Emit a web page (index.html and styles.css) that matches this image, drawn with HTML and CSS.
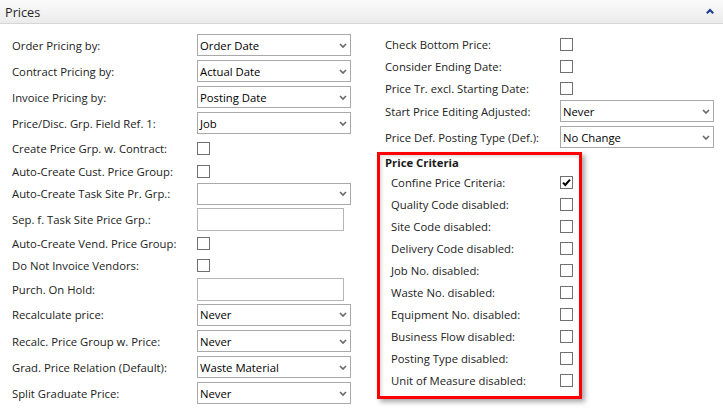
FILE: index.html
```html
<!DOCTYPE html>
<html>
<head>
<meta charset="utf-8">
<link rel="stylesheet" href="styles.css">
</head>
<body>
<div class="panel">
  <div class="header">
    <span class="title">Prices</span>
    <svg class="collapse" width="8" height="6" viewBox="0 0 8 6"><polyline points="0.8,5.2 4,2 7.2,5.2" fill="none" stroke="#1f3e8f" stroke-width="2.2"/></svg>
  </div>
  <div class="content">
    <div class="col-left">
      <div class="grid-left">
        <div class="lbl">Order Pricing by:</div>
        <div class="select"><span>Order Date</span><svg class="arrow" width="8" height="5" viewBox="0 0 8 5"><polyline points="1,1 4,4 7,1" fill="none" stroke="#6b6b6b" stroke-width="1.7"/></svg></div>
        <div class="lbl">Contract Pricing by:</div>
        <div class="select"><span>Actual Date</span><svg class="arrow" width="8" height="5" viewBox="0 0 8 5"><polyline points="1,1 4,4 7,1" fill="none" stroke="#6b6b6b" stroke-width="1.7"/></svg></div>
        <div class="lbl">Invoice Pricing by:</div>
        <div class="select"><span>Posting Date</span><svg class="arrow" width="8" height="5" viewBox="0 0 8 5"><polyline points="1,1 4,4 7,1" fill="none" stroke="#6b6b6b" stroke-width="1.7"/></svg></div>
        <div class="lbl">Price/Disc. Grp. Field Ref. 1:</div>
        <div class="select"><span>Job</span><svg class="arrow" width="8" height="5" viewBox="0 0 8 5"><polyline points="1,1 4,4 7,1" fill="none" stroke="#6b6b6b" stroke-width="1.7"/></svg></div>
        <div class="lbl">Create Price Grp. w. Contract:</div>
        <div class="cb"></div>
        <div class="lbl">Auto-Create Cust. Price Group:</div>
        <div class="cb"></div>
        <div class="lbl">Auto-Create Task Site Pr. Grp.:</div>
        <div class="select"><span></span><svg class="arrow" width="8" height="5" viewBox="0 0 8 5"><polyline points="1,1 4,4 7,1" fill="none" stroke="#6b6b6b" stroke-width="1.7"/></svg></div>
        <div class="lbl">Sep. f. Task Site Price Grp.:</div>
        <div class="textbox"></div>
        <div class="lbl">Auto-Create Vend. Price Group:</div>
        <div class="cb"></div>
        <div class="lbl">Do Not Invoice Vendors:</div>
        <div class="cb"></div>
        <div class="lbl">Purch. On Hold:</div>
        <div class="textbox"></div>
        <div class="lbl">Recalculate price:</div>
        <div class="select"><span>Never</span><svg class="arrow" width="8" height="5" viewBox="0 0 8 5"><polyline points="1,1 4,4 7,1" fill="none" stroke="#6b6b6b" stroke-width="1.7"/></svg></div>
        <div class="lbl">Recalc. Price Group w. Price:</div>
        <div class="select"><span>Never</span><svg class="arrow" width="8" height="5" viewBox="0 0 8 5"><polyline points="1,1 4,4 7,1" fill="none" stroke="#6b6b6b" stroke-width="1.7"/></svg></div>
        <div class="lbl">Grad. Price Relation (Default):</div>
        <div class="select"><span>Waste Material</span><svg class="arrow" width="8" height="5" viewBox="0 0 8 5"><polyline points="1,1 4,4 7,1" fill="none" stroke="#6b6b6b" stroke-width="1.7"/></svg></div>
        <div class="lbl">Split Graduate Price:</div>
        <div class="select"><span>Never</span><svg class="arrow" width="8" height="5" viewBox="0 0 8 5"><polyline points="1,1 4,4 7,1" fill="none" stroke="#6b6b6b" stroke-width="1.7"/></svg></div>
      </div>
    </div>
    <div class="col-right">
      <div class="grid-right">
        <div class="lbl">Check Bottom Price:</div>
        <div class="cb"></div>
        <div class="lbl">Consider Ending Date:</div>
        <div class="cb"></div>
        <div class="lbl">Price Tr. excl. Starting Date:</div>
        <div class="cb"></div>
        <div class="lbl">Start Price Editing Adjusted:</div>
        <div class="select"><span>Never</span><svg class="arrow" width="8" height="5" viewBox="0 0 8 5"><polyline points="1,1 4,4 7,1" fill="none" stroke="#6b6b6b" stroke-width="1.7"/></svg></div>
        <div class="lbl">Price Def. Posting Type (Def.):</div>
        <div class="select"><span>No Change</span><svg class="arrow" width="8" height="5" viewBox="0 0 8 5"><polyline points="1,1 4,4 7,1" fill="none" stroke="#6b6b6b" stroke-width="1.7"/></svg></div>
      </div>
      <div class="group">
        <div class="group-title">Price Criteria</div>
        <div class="grid-group">
          <div class="lbl">Confine Price Criteria:</div>
          <div class="cb checked"><svg width="11" height="11" viewBox="0 0 11 11"><polyline points="2,5.6 4.3,8 9,2.6" fill="none" stroke="#000" stroke-width="2"/></svg></div>
          <div class="lbl">Quality Code disabled:</div>
          <div class="cb"></div>
          <div class="lbl">Site Code disabled:</div>
          <div class="cb"></div>
          <div class="lbl">Delivery Code disabled:</div>
          <div class="cb"></div>
          <div class="lbl">Job No. disabled:</div>
          <div class="cb"></div>
          <div class="lbl">Waste No. disabled:</div>
          <div class="cb"></div>
          <div class="lbl">Equipment No. disabled:</div>
          <div class="cb"></div>
          <div class="lbl">Business Flow disabled:</div>
          <div class="cb"></div>
          <div class="lbl">Posting Type disabled:</div>
          <div class="cb"></div>
          <div class="lbl">Unit of Measure disabled:</div>
          <div class="cb"></div>
        </div>
      </div>
    </div>
  </div>
</div>
</body>
</html>
```
FILE: styles.css
```css
html, body {
  margin: 0;
  padding: 0;
  background: #ffffff;
}

body {
  font-family: "Open Sans", "Noto Sans", sans-serif;
  font-size: 11.3px;
  color: #222222;
}

.panel {
  width: 723px;
  height: 415px;
  overflow: hidden;
}

.header {
  height: 23px;
  border-bottom: 1px solid #d6d6d6;
  background: linear-gradient(#fbfbfb, #ebebeb);
  display: flex;
  align-items: center;
  justify-content: space-between;
  padding: 0 9px 0 5px;
}

.title {
  font-size: 12.7px;
  color: #262626;
}

.collapse {
  display: block;
  margin-bottom: 2px;
}

.content {
  display: flex;
  padding-top: 8px;
}

.col-left {
  width: 377px;
  padding-left: 12px;
  box-sizing: border-box;
}

.grid-left {
  display: grid;
  grid-template-columns: 185px 154px;
  grid-template-rows: 26px 26px 26px 26px 24px 22px 23px 28px 20px 24px 24px 27px 26px 26px 26px;
  align-items: center;
}

.col-right {
  width: 346px;
}

.grid-right {
  display: grid;
  grid-template-columns: 175px 154px;
  grid-template-rows: 22px 22px 22px 24px 28px;
  align-items: center;
  margin-top: 1px;
  padding-left: 8px;
}

.lbl {
  line-height: 15px;
  white-space: nowrap;
}

.select {
  width: 154px;
  height: 22px;
  box-sizing: border-box;
  border: 1px solid #a9a9a9;
  display: flex;
  align-items: center;
  justify-content: space-between;
  padding: 0 3px 0 2px;
  color: #000000;
  line-height: 15px;
  white-space: nowrap;
}

.arrow {
  display: block;
}

.textbox {
  width: 147px;
  height: 23px;
  box-sizing: border-box;
  border: 1px solid #b5b5b5;
}

.cb {
  width: 13px;
  height: 13px;
  box-sizing: border-box;
  border: 1px solid #707070;
  background: #ffffff;
  display: flex;
  align-items: center;
  justify-content: center;
}

.cb svg {
  display: block;
}

.group {
  margin-top: 1px;
  width: 205px;
  height: 247px;
  box-sizing: border-box;
  border: 3px solid #ff0000;
  padding: 0 0 5px 5px;
  box-shadow: 3px 3px 5px rgba(0, 0, 0, 0.35), inset 2px 2px 3px rgba(0, 0, 0, 0.12);
}

.group-title {
  font-weight: bold;
  line-height: 15px;
  color: #1a1a1a;
}

.grid-group {
  display: grid;
  grid-template-columns: 169px 13px;
  grid-template-rows: repeat(10, 22px);
  align-items: center;
  margin-left: 6px;
  padding-top: 1px;
}
```
